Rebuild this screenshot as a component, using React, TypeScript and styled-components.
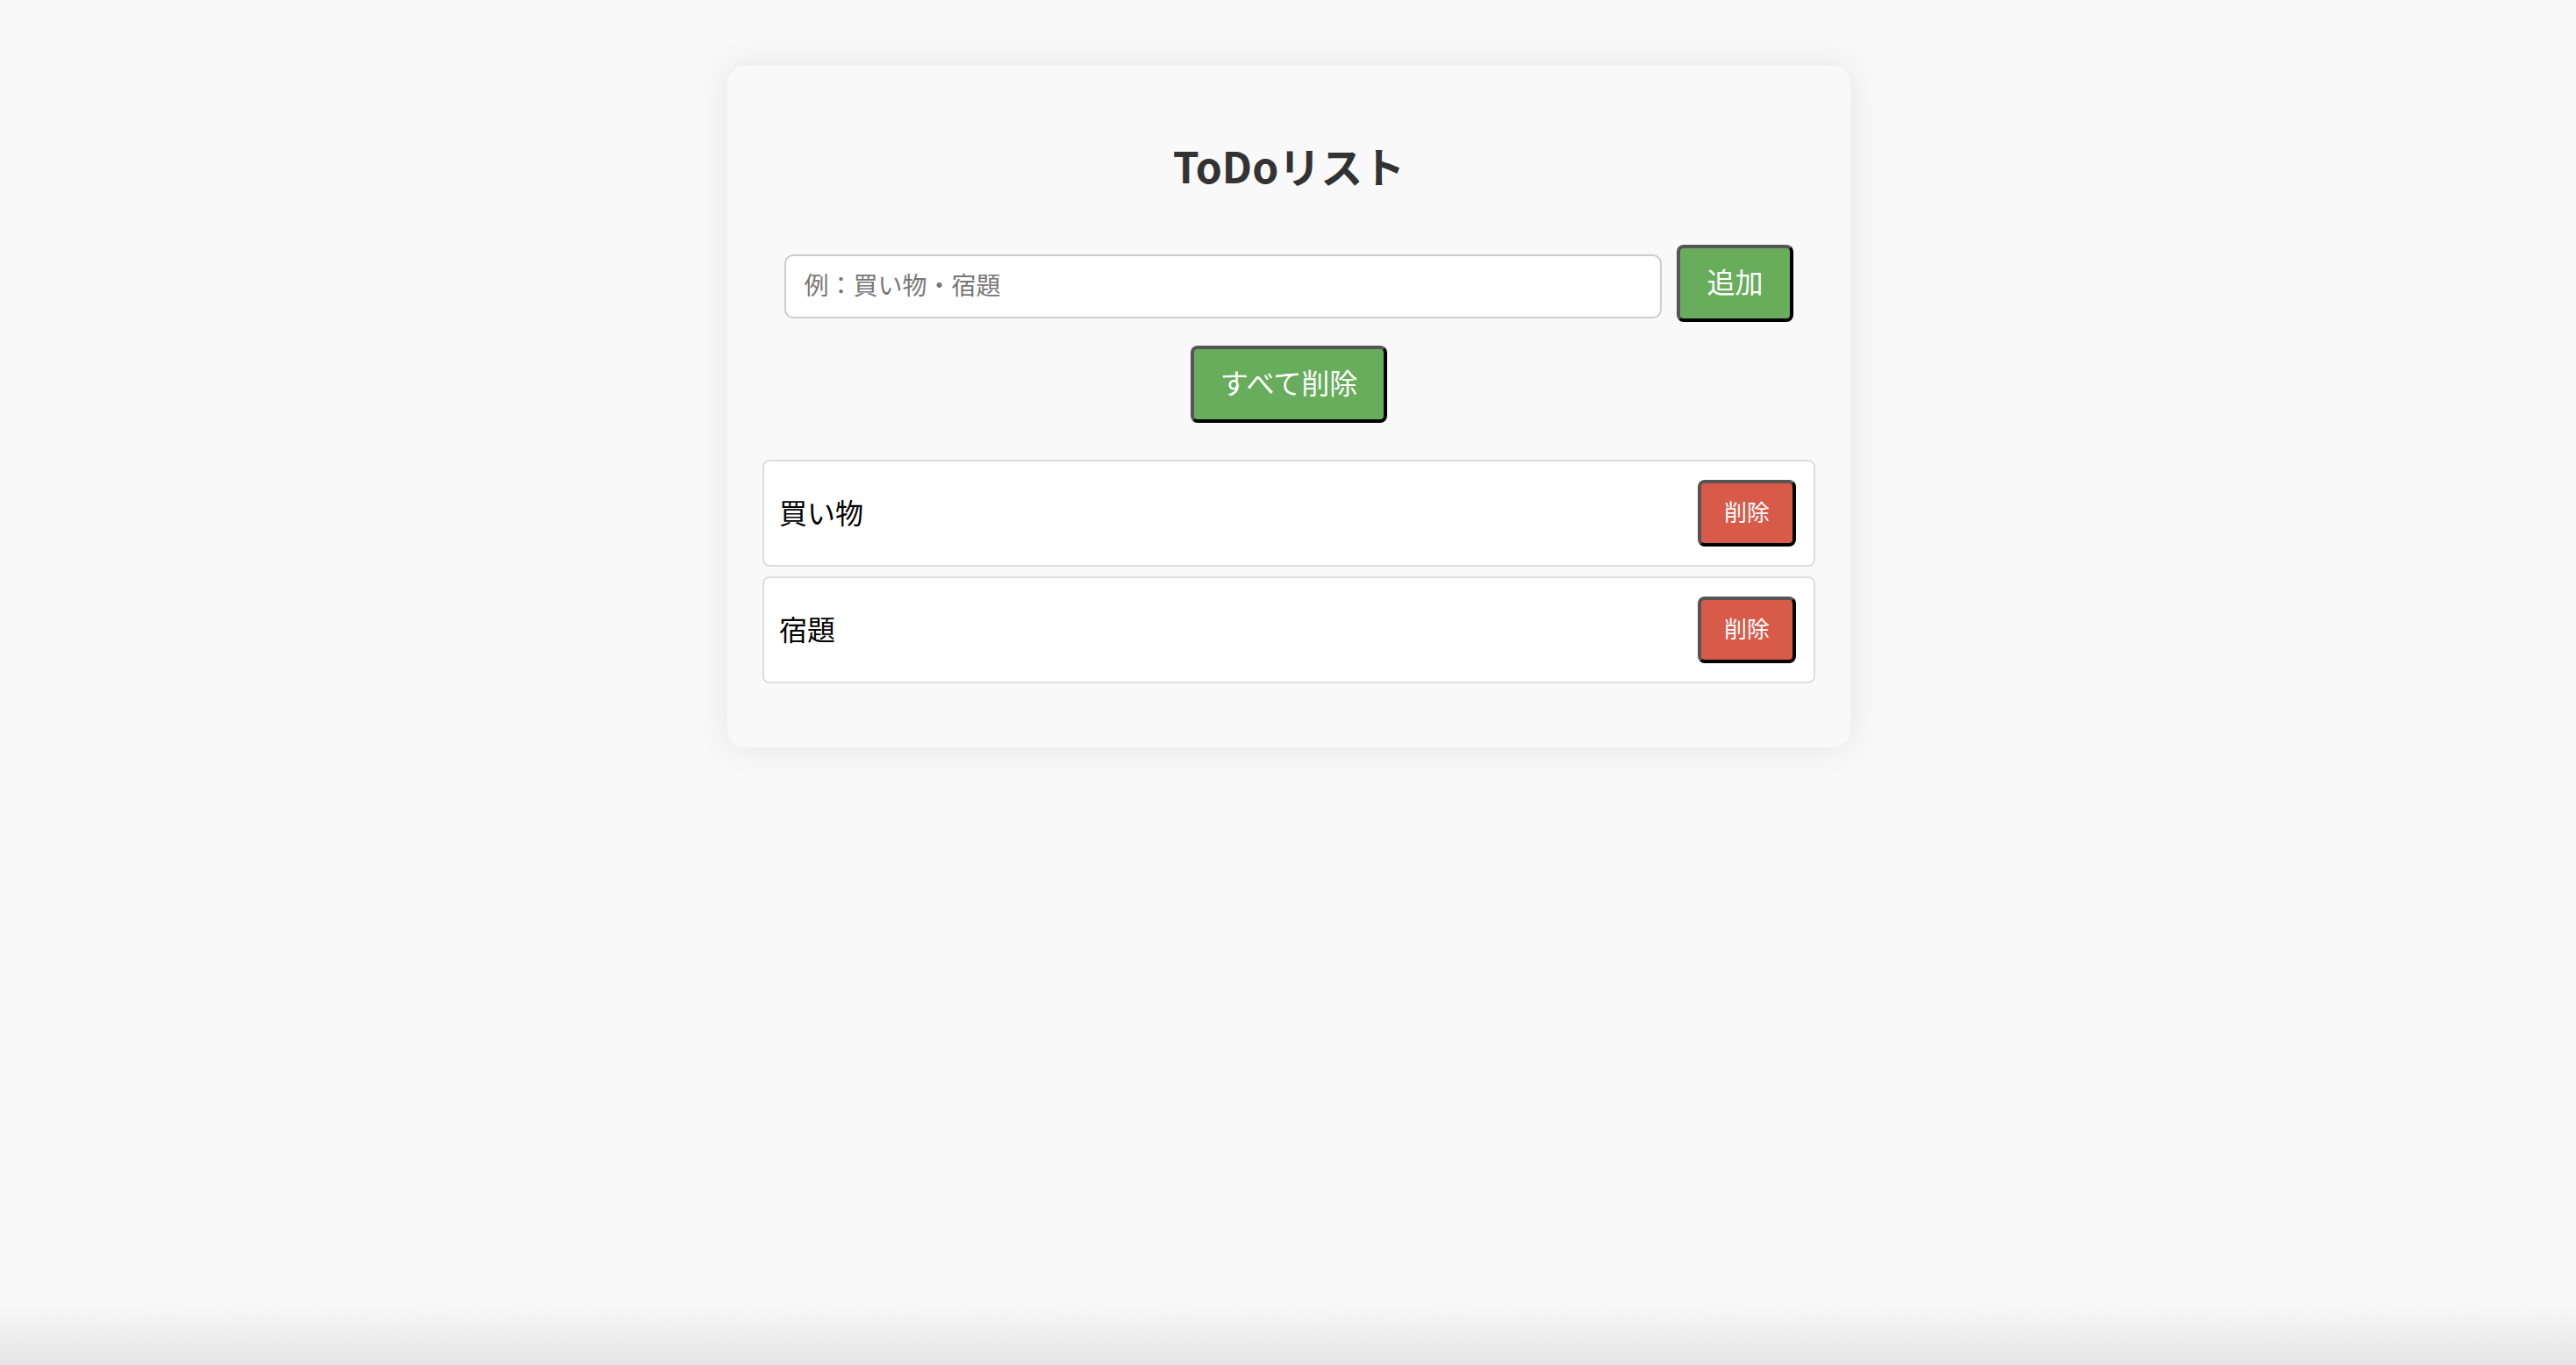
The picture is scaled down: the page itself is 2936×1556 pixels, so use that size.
import React, { useState } from "react";
import styled, { createGlobalStyle } from "styled-components";

const GlobalStyle = createGlobalStyle`
  html, body {
    margin: 0;
    padding: 0;
  }
  body {
    min-height: 100vh;
    background: linear-gradient(to bottom, #f8f8f8 0, #f8f8f8 calc(100% - 70px), #e4e4e4 100%);
    font-family: "Noto Sans CJK JP", "Noto Sans", sans-serif;
  }
`;

const Page = styled.div`
  display: flex;
  justify-content: center;
  padding-top: 75px;
  padding-left: 2px;
`;

const Card = styled.div`
  width: 1280px;
  box-sizing: border-box;
  padding: 40px 40px 40px;
  background: #f9f9f9;
  border-radius: 20px;
  box-shadow: 0 0 36px rgba(0, 0, 0, 0.08);
`;

const Title = styled.h1`
  margin: 37px 0 55px;
  text-align: center;
  font-size: 48px;
  line-height: 72px;
  font-weight: 700;
  color: #333;
`;

const InputRow = styled.div`
  display: flex;
  justify-content: center;
  align-items: flex-start;
  gap: 17px;
`;

const TextInput = styled.input`
  width: 1000px;
  height: 73px;
  box-sizing: border-box;
  margin-top: 11px;
  padding: 0 20px 5px;
  border: 2px solid #cccccc;
  border-radius: 10px;
  background: #fff;
  font-family: inherit;
  font-size: 28px;
  color: #222;
  outline: none;
  &::placeholder {
    color: #777;
  }
`;

const Button = styled.button<{ $variant: "green" | "red"; $small?: boolean }>`
  box-sizing: border-box;
  border-style: solid;
  border-width: 4px;
  border-color: #555 #000 #000 #555;
  border-radius: 8px;
  background: ${(p) => (p.$variant === "green" ? "#67ad5c" : "#d85a49")};
  color: #fff;
  font-family: inherit;
  font-size: ${(p) => (p.$small ? "26px" : "32px")};
  line-height: ${(p) => (p.$small ? "32px" : "40px")};
  padding: ${(p) => (p.$small ? "16px 26px 20px" : "17px 30px 23px")};
  cursor: pointer;
  white-space: nowrap;
`;

const ClearRow = styled.div`
  display: flex;
  justify-content: center;
  margin-top: 27px;
`;

const List = styled.ul`
  list-style: none;
  margin: 42px 0 33px;
  padding: 0;
  display: flex;
  flex-direction: column;
  gap: 11px;
`;

const Item = styled.li`
  display: flex;
  align-items: center;
  justify-content: space-between;
  padding: 21px 20px 21px 17px;
  background: #fff;
  border: 2px solid #dddddd;
  border-radius: 8px;
`;

const ItemText = styled.span`
  font-size: 32px;
  color: #000;
  padding-bottom: 4px;
`;

export default function App() {
  const [items, setItems] = useState<string[]>(["買い物", "宿題"]);
  const [text, setText] = useState("");

  const add = () => {
    if (!text.trim()) return;
    setItems([...items, text.trim()]);
    setText("");
  };

  return (
    <>
      <GlobalStyle />
      <Page>
        <Card>
          <Title>ToDoリスト</Title>
          <InputRow>
            <TextInput
              placeholder="例：買い物・宿題"
              value={text}
              onChange={(e) => setText(e.target.value)}
            />
            <Button $variant="green" onClick={add}>
              追加
            </Button>
          </InputRow>
          <ClearRow>
            <Button $variant="green" onClick={() => setItems([])}>
              すべて削除
            </Button>
          </ClearRow>
          <List>
            {items.map((it, i) => (
              <Item key={i}>
                <ItemText>{it}</ItemText>
                <Button
                  $variant="red"
                  $small
                  onClick={() => setItems(items.filter((_, j) => j !== i))}
                >
                  削除
                </Button>
              </Item>
            ))}
          </List>
        </Card>
      </Page>
    </>
  );
}
